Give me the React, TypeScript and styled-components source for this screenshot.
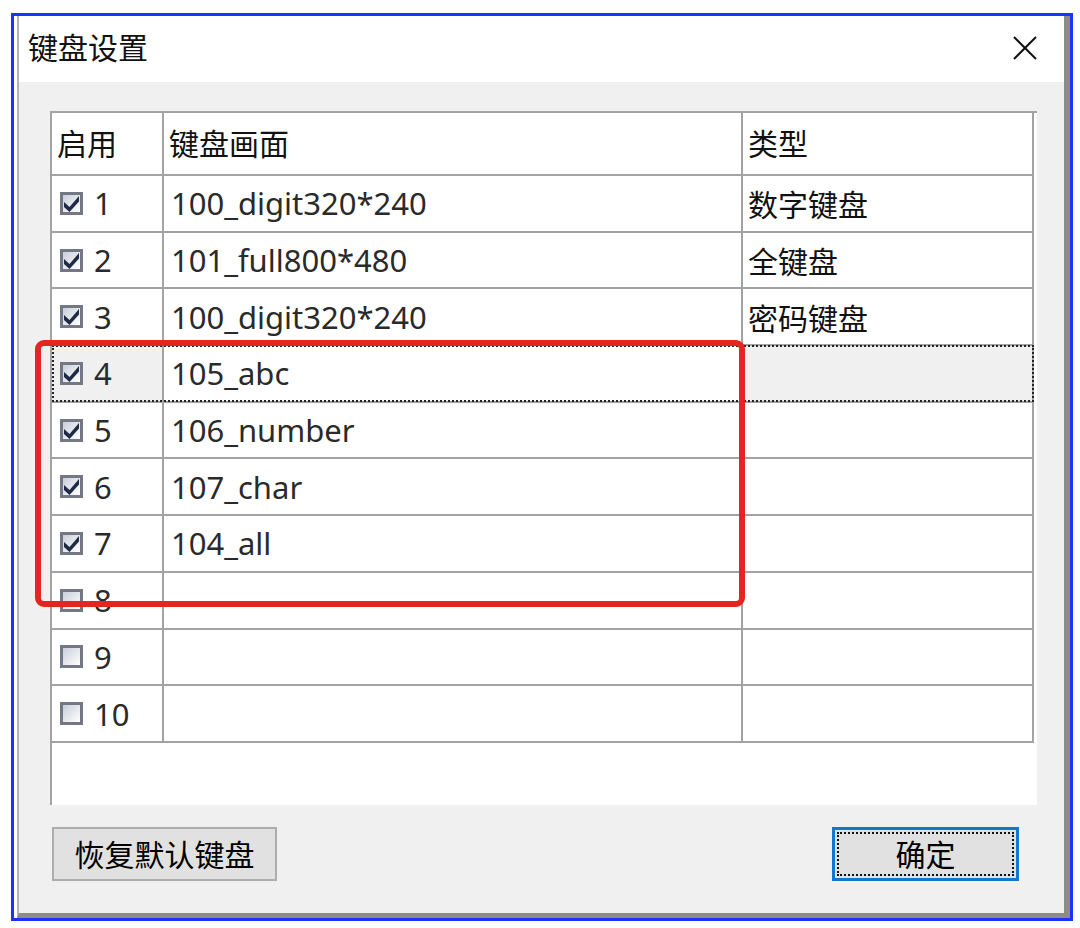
import styled, { createGlobalStyle } from 'styled-components';

const GlobalStyle = createGlobalStyle`
  html, body {
    margin: 0;
    padding: 0;
    background: #ffffff;
  }
  * {
    box-sizing: border-box;
  }
`;

const cjk = `"Noto Sans CJK SC", "Noto Sans", sans-serif`;
const latin = `"Noto Sans", "Open Sans", "Noto Sans CJK SC", sans-serif`;
const gridLine = '#a3a3a3';

// blue annotation frame round the whole dialog
const Frame = styled.div`
  position: relative;
  margin: 13px 0 0 11px;
  width: 1062px;
  height: 908px;
  border: 3px solid #1c32ff;
  display: flex;
`;

const Window = styled.div`
  margin-left: 3px;
  flex: 1;
  display: flex;
  flex-direction: column;
  border-left: 2px solid #b4b4b4;
  border-right: 6px solid #8c8c8c;
  border-bottom: 5px solid #8c8c8c;
  background: #f0f0f0;
`;

const TitleBar = styled.div`
  height: 66px;
  background: #ffffff;
  display: flex;
  align-items: center;
  justify-content: space-between;
  padding: 0 27px 0 9px;
`;

const Title = styled.div`
  font-family: ${cjk};
  font-size: 30px;
  color: #111;
  padding-bottom: 6px;
`;

const CloseButton = styled.div`
  width: 24px;
  height: 24px;
  display: flex;
  margin-bottom: 2px;
`;

const Body = styled.div`
  flex: 1;
  display: flex;
  flex-direction: column;
  padding: 29px 0 0 31px;
`;

const ListBox = styled.div`
  width: 987px;
  height: 694px;
  background: #ffffff;
  border-left: 2px solid ${gridLine};
  border-top: 2px solid ${gridLine};
`;

const Row = styled.div<{ $header?: boolean; $selected?: boolean }>`
  position: relative;
  display: flex;
  width: 982px;
  height: ${p => (p.$header ? '63px' : '56.7px')};

  ${p =>
    p.$selected &&
    `
    &::after {
      content: '';
      position: absolute;
      left: 0;
      right: 0;
      top: -1px;
      bottom: 1px;
      border: 2px dotted #222;
      pointer-events: none;
    }
  `}
`;

const Cell = styled.div<{ $w: number; $gray?: boolean }>`
  width: ${p => p.$w}px;
  flex: none;
  display: flex;
  align-items: center;
  padding-left: 7px;
  border-right: 2px solid ${gridLine};
  border-bottom: 2px solid ${gridLine};
  background: ${p => (p.$gray ? '#f0f0f0' : '#ffffff')};
  font-family: ${latin};
  font-size: 31px;
  color: #2a2a2a;
  white-space: nowrap;
  overflow: hidden;
`;

const HeaderCell = styled(Cell)`
  font-family: ${cjk};
  font-size: 30px;
  color: #111;
  padding-left: 5px;
  padding-bottom: 3px;
`;

const TypeText = styled.span`
  font-family: ${cjk};
  font-size: 30px;
  color: #111;
  margin-left: -2px;
`;

const CheckWrap = styled.span`
  display: flex;
  align-items: center;
  gap: 10px;
`;

const ButtonRow = styled.div`
  display: flex;
  justify-content: space-between;
  align-items: center;
  margin-top: 22px;
  padding: 0 45px 0 2px;
`;

const Button = styled.div<{ $primary?: boolean }>`
  height: 54px;
  display: flex;
  align-items: center;
  justify-content: center;
  font-family: ${cjk};
  font-size: 30px;
  color: #000;
  background: #e1e1e1;
  border: ${p => (p.$primary ? '3px solid #1476cc' : '2px solid #adadad')};
  width: ${p => (p.$primary ? '187px' : '225px')};
  padding: ${p => (p.$primary ? '2px' : '0 0 2px 0')};
`;

const FocusInner = styled.div`
  width: 100%;
  height: 100%;
  border: 2px dotted #111;
  display: flex;
  align-items: center;
  justify-content: center;
  padding-bottom: 2px;
`;

const RedMark = styled.div`
  position: absolute;
  left: 21px;
  top: 324px;
  width: 710px;
  height: 267px;
  border: 6px solid #e3261f;
  border-radius: 9px;
  pointer-events: none;
`;

const Check = ({ on }: { on: boolean }) => (
  <svg width="25" height="25" viewBox="0 0 25 25">
    <defs>
      <linearGradient id="cbFill" x1="0" y1="0" x2="1" y2="1">
        <stop offset="0" stopColor="#c9ceda" />
        <stop offset="1" stopColor="#ffffff" />
      </linearGradient>
    </defs>
    <rect x="1" y="1" width="23" height="23" fill="#747884" />
    <rect x="4" y="4" width="17" height="17" fill="url(#cbFill)" />
    {on && <path d="M5 11 L10.5 16 L20 5 L20 10.5 L10.5 21 L5 16 Z" fill="#1e2b45" />}
  </svg>
);

const widths = [112, 579, 291];

const rows = [
  { on: true, name: '100_digit320*240', type: '数字键盘' },
  { on: true, name: '101_full800*480', type: '全键盘' },
  { on: true, name: '100_digit320*240', type: '密码键盘' },
  { on: true, name: '105_abc', type: '' },
  { on: true, name: '106_number', type: '' },
  { on: true, name: '107_char', type: '' },
  { on: true, name: '104_all', type: '' },
  { on: false, name: '', type: '' },
  { on: false, name: '', type: '' },
  { on: false, name: '', type: '' }
];

export default function App() {
  return (
    <>
      <GlobalStyle />
      <Frame>
        <Window>
          <TitleBar>
            <Title>键盘设置</Title>
            <CloseButton>
              <svg width="24" height="24" viewBox="0 0 24 24">
                <path d="M1 1 L23 23 M23 1 L1 23" stroke="#111" strokeWidth="2" />
              </svg>
            </CloseButton>
          </TitleBar>
          <Body>
            <ListBox>
              <Row $header>
                <HeaderCell $w={widths[0]}>启用</HeaderCell>
                <HeaderCell $w={widths[1]}>键盘画面</HeaderCell>
                <HeaderCell $w={widths[2]}>类型</HeaderCell>
              </Row>
              {rows.map((r, i) => {
                const selected = i === 3;
                return (
                  <Row key={i} $selected={selected}>
                    <Cell $w={widths[0]} $gray={selected}>
                      <CheckWrap>
                        <Check on={r.on} />
                        {i + 1}
                      </CheckWrap>
                    </Cell>
                    <Cell $w={widths[1]}>{r.name}</Cell>
                    <Cell $w={widths[2]} $gray={selected}>
                      <TypeText>{r.type}</TypeText>
                    </Cell>
                  </Row>
                );
              })}
            </ListBox>
            <ButtonRow>
              <Button>恢复默认键盘</Button>
              <Button $primary>
                <FocusInner>确定</FocusInner>
              </Button>
            </ButtonRow>
          </Body>
        </Window>
        <RedMark />
      </Frame>
    </>
  );
}
